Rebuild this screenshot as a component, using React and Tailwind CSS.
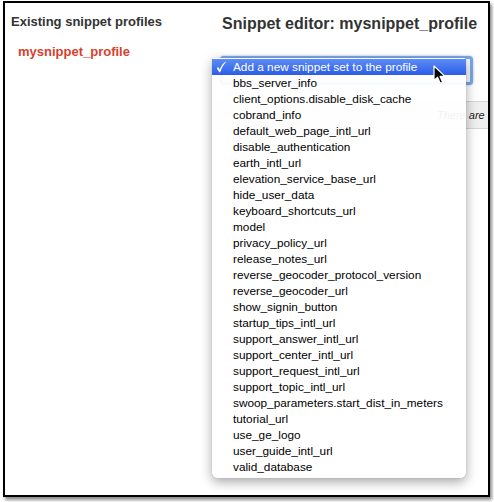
import React from "react";

const items = [
  "bbs_server_info",
  "client_options.disable_disk_cache",
  "cobrand_info",
  "default_web_page_intl_url",
  "disable_authentication",
  "earth_intl_url",
  "elevation_service_base_url",
  "hide_user_data",
  "keyboard_shortcuts_url",
  "model",
  "privacy_policy_url",
  "release_notes_url",
  "reverse_geocoder_protocol_version",
  "reverse_geocoder_url",
  "show_signin_button",
  "startup_tips_intl_url",
  "support_answer_intl_url",
  "support_center_intl_url",
  "support_request_intl_url",
  "support_topic_intl_url",
  "swoop_parameters.start_dist_in_meters",
  "tutorial_url",
  "use_ge_logo",
  "user_guide_intl_url",
  "valid_database",
];

function Cursor() {
  return (
    <svg width="14" height="20" viewBox="0 0 14 20">
      <path
        d="M1 1 L1 15.5 L4.6 12.2 L7.2 18.2 L9.6 17.2 L7.1 11.4 L12 11.4 Z"
        fill="#000"
        stroke="#fff"
        strokeWidth="1.2"
        strokeLinejoin="round"
      />
    </svg>
  );
}

function Check() {
  return (
    <svg width="10" height="12" viewBox="0 0 10 12" className="block">
      <path
        d="M0.8 7 L2.2 6 L3.6 8.6 Q5.6 3.6 9.4 0.6 L9.8 1.2 Q6.4 4.6 4.2 11.2 L3.2 11.2 Z"
        fill="#fff"
      />
    </svg>
  );
}

export default function App() {
  return (
    <div className="w-[494px] h-[502px] bg-white pt-[1px] pl-[3px] font-['Liberation_Sans',Arial,sans-serif]">
      <div className="relative w-[487px] h-[496px] border-2 border-black bg-white overflow-hidden shadow-[2px_3px_3px_rgba(0,0,0,0.45)] flex">
        {/* left column */}
        <div className="w-[210px] shrink-0 pl-[6px] pt-[11px] flex flex-col">
          <div className="text-[13px] leading-[16px] font-bold text-[#333]">Existing snippet profiles</div>
          <div className="mt-[14px] ml-[7px] text-[13px] leading-[16px] font-bold text-[#d7412c]">mysnippet_profile</div>
        </div>
        {/* right column */}
        <div className="flex-1 flex flex-col pt-[11px]">
          <div className="pl-[7px] text-[16px] leading-[20px] font-bold text-[#333]">Snippet editor: mysnippet_profile</div>
          <div className="mt-[22px] ml-[5px] w-[253px] h-[29px] rounded-[4px] border-[3px] border-[#7aa6e8] bg-[#f7f9fd] shadow-[0_0_2px_rgba(60,120,220,0.6)]" />
          <div className="mt-[16px] h-[28px] bg-[#efefef] border-t border-b border-[#d6d6d6] pl-[222px] flex items-center">
            <span className="italic text-[11px] text-[#222] whitespace-nowrap">There are</span>
          </div>
        </div>

        {/* dropdown menu */}
        <div className="absolute left-[207px] top-[55px] w-[254px] h-[420px] bg-white/[0.94] rounded-b-[6px] rounded-t-[2px] shadow-[0_4px_12px_rgba(0,0,0,0.35),0_0_1px_rgba(0,0,0,0.3)] pt-[1px] text-[11.8px] text-black">
          <div className="h-[16px] flex items-center bg-gradient-to-b from-[#5d8cf5] to-[#2b5ce8] text-white">
            <span className="w-[21px] pl-[4px] flex items-center">
              <Check />
            </span>
            <span className="leading-[16px] whitespace-nowrap">Add a new snippet set to the profile</span>
          </div>
          {items.map((t) => (
            <div key={t} className="h-[16px] leading-[16px] pl-[21px] whitespace-nowrap">{t}</div>
          ))}
        </div>

        {/* mouse cursor */}
        <div className="absolute left-[428px] top-[62px]">
          <Cursor />
        </div>
      </div>
    </div>
  );
}
